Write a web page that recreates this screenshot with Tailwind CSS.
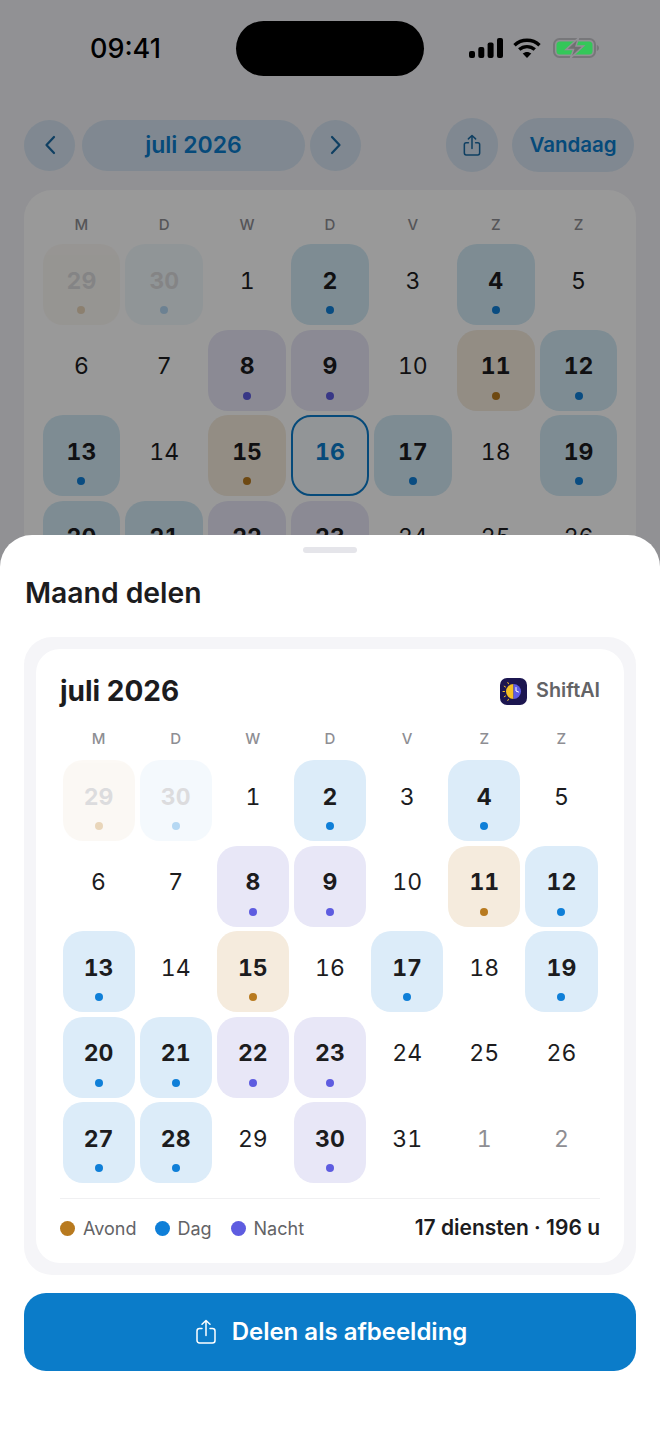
<!DOCTYPE html>
<html lang="nl">
<head>
  <meta charset="UTF-8">
  <meta name="viewport" content="width=device-width, initial-scale=1.0">
  <title>Maand delen | ShiftAI</title>
  <script src="https://cdn.jsdelivr.net/npm/@tailwindcss/browser@4"></script>
</head>
<body class="bg-white">
<div class="relative w-[660px] h-[1434px] overflow-hidden bg-[#f2f2f7] font-['Inter','Liberation_Sans',sans-serif] [font-optical-sizing:none]">

  <!-- Kalender achter de sheet -->
  <div>
    <div class="relative z-10 flex items-start justify-between h-[118px] pl-[90px] pr-[61px] pt-[32px]">
      <span class="text-[27px] leading-[34px] font-medium text-black">09:41</span>
      <div class="flex items-center gap-[10px] pt-[6px]">
        <svg class="-ml-[1px]" width="34" height="20" viewBox="0 0 34 20" fill="#000"><rect x="0" y="13" width="6" height="7" rx="2"/><rect x="9.300" y="9" width="6" height="11" rx="2"/><rect x="18.600" y="4.500" width="6" height="15.500" rx="2"/><rect x="28" y="0" width="6" height="20" rx="2"/></svg>
        <svg width="28" height="20" viewBox="0 0 28 20" fill="none" stroke="#000" stroke-width="3.400"><path d="M1.500 7.200C8.500 .6 19.500 .6 26.500 7.200"/><path d="M6.200 11.600C10.700 7.600 17.300 7.600 21.800 11.600"/><path d="M14 20 9.700 15.600C12.200 13.500 15.800 13.500 18.300 15.600Z" fill="#000" stroke="none"/></svg>
        <svg class="ml-[2px]" width="46" height="20" viewBox="0 0 46 20"><rect x="1" y="1" width="41" height="18" rx="5.500" fill="none" stroke="#77777a" stroke-width="2"/><rect x="3.500" y="3.500" width="36" height="13" rx="3.500" fill="#34c759"/><path d="M43.800 7v6c1.400-.5 2.200-1.600 2.200-3s-.8-2.500-2.200-3Z" fill="#77777a"/><path d="M25.500 0 13 11.500h7.500L17.500 20l13-12h-7.500Z" fill="#707072" stroke="#929196" stroke-width="1.500"/></svg>
      </div>
    </div>

    <div class="flex items-center h-[54px] px-[24px]">
      <button class="flex items-center justify-center w-[51px] h-[51px] rounded-full bg-[#0a7ccc]/12">
        <svg width="14" height="22" viewBox="0 0 14 22" fill="none" stroke="#1a6aa3" stroke-width="2.200" stroke-linecap="round" stroke-linejoin="round"><path d="M11 3 3.500 11l7.500 8"/></svg>
      </button>
      <div class="flex items-center justify-center w-[223px] h-[51px] ml-[7px] rounded-full bg-[#0a7ccc]/12 text-[23px] font-semibold text-[#0a7ccc]">juli 2026</div>
      <button class="flex items-center justify-center w-[51px] h-[51px] ml-[5px] rounded-full bg-[#0a7ccc]/12">
        <svg width="14" height="22" viewBox="0 0 14 22" fill="none" stroke="#1a6aa3" stroke-width="2.200" stroke-linecap="round" stroke-linejoin="round"><path d="M3 3l7.500 8L3 19"/></svg>
      </button>
      <button class="flex items-center justify-center w-[52px] h-[54px] ml-auto rounded-full bg-[#0a7ccc]/12">
        <svg width="18" height="22" viewBox="0 0 20 24" fill="none" stroke="#1a6aa3" stroke-width="1.700" stroke-linecap="round" stroke-linejoin="round"><path d="M6 9.500H3.500a2 2 0 0 0-2 2V21a2 2 0 0 0 2 2h13a2 2 0 0 0 2-2v-9.500a2 2 0 0 0-2-2H14"/><path d="M10 16V1.500M6 5.200 10 1.500l4 3.700"/></svg>
      </button>
      <button class="flex items-center justify-center w-[122px] h-[54px] ml-[14px] mr-[2px] rounded-full bg-[#0a7ccc]/12 text-[20.500px] font-semibold text-[#0a7ccc]">Vandaag</button>
    </div>

    <div class="mx-[24px] mt-[18px] px-[16px] pt-[23px] rounded-[28px] bg-white h-[700px]">
      <div class="grid grid-cols-7 mb-[5px]" data-weekdays></div>
      <div class="grid grid-cols-7" data-grid="back"></div>
    </div>
  </div>

  <div class="absolute top-[21px] left-[236px] w-[188px] h-[55px] rounded-full bg-black z-10"></div>

  <!-- Dimlaag -->
  <div class="absolute inset-0 bg-black/40"></div>

  <!-- Sheet -->
  <div class="absolute top-[535px] left-0 right-0 bottom-0 rounded-t-[32px] bg-white px-[24px]">
    <div class="w-[54px] h-[6px] mx-auto mt-[12px] rounded-full bg-[#e5e5ea]"></div>
    <h2 class="mt-[22px] ml-[1px] text-[28.300px] leading-[36px] font-semibold text-[#1c1c1e]">Maand delen</h2>

    <div class="mt-[26px] p-[12px] rounded-[28px] bg-[#f5f5f8]">
      <div class="px-[24px] pt-[20px] pb-[5px] rounded-[24px] bg-white">
        <div class="flex items-center justify-between h-[44px]">
          <span class="text-[28px] font-bold text-[#1c1c1e]">juli 2026</span>
          <div class="flex items-center gap-[9px]">
            <svg width="27" height="27" viewBox="0 0 27 27">
              <rect width="27" height="27" rx="7" fill="#1c1650"/>
              <g stroke="#f5c024" stroke-width="1" stroke-linecap="round"><path d="M4.500 13.500H3M5.500 9 4.200 8.200M5.500 18l-1.300.8M8.500 5.800 7.800 4.500M8.500 21.200l-.7 1.300"/></g>
              <path d="M13.500 6a7.500 7.500 0 0 0 0 15Z" fill="#f5c024"/>
              <path d="M13.500 6a7.500 7.500 0 0 1 0 15Z" fill="#5e5ce6"/>
              <path d="M16 9.500v3.500l2.500 1" fill="none" stroke="#fff" stroke-width="1" stroke-linecap="round"/>
            </svg>
            <span class="text-[19.800px] font-semibold text-[#636366]">ShiftAI</span>
          </div>
        </div>
        <div class="grid grid-cols-7 mt-[14px] mb-[7px]" data-weekdays></div>
        <div class="grid grid-cols-7" data-grid="front"></div>
        <div class="flex items-center justify-between h-[60px] mt-[12px] border-t border-[#f0f0f2]">
          <div class="flex items-center text-[18px] text-[#636366]">
            <span class="w-[15px] h-[15px] rounded-full bg-[#b87a1f]"></span><span class="ml-[8px]">Avond</span>
            <span class="w-[15px] h-[15px] ml-[19px] rounded-full bg-[#0f7fd8]"></span><span class="ml-[7px]">Dag</span>
            <span class="w-[15px] h-[15px] ml-[19px] rounded-full bg-[#5e5ce0]"></span><span class="ml-[8px]">Nacht</span>
          </div>
          <span class="text-[21px] font-semibold text-[#1c1c1e]">17 diensten · 196 u</span>
        </div>
      </div>
    </div>

    <button class="flex items-center justify-center gap-[16px] w-full h-[78px] mt-[18px] pl-[3px] rounded-[22px] bg-[#0b7cc9] text-[24px] font-semibold text-white">
      <svg width="20" height="25" viewBox="0 0 20 25" fill="none" stroke="#fff" stroke-width="1.500" stroke-linecap="round" stroke-linejoin="round"><path d="M6 9.500H3.500a2.500 2.500 0 0 0-2.500 2.500v9.500A2.500 2.500 0 0 0 3.500 24h13a2.500 2.500 0 0 0 2.500-2.500V12a2.500 2.500 0 0 0-2.500-2.500H14"/><path d="M10 16.500V1.500M6 5.200 10 1.500l4 3.700"/></svg>
      Delen als afbeelding
    </button>
  </div>
</div>

<script>
  const dag = "b", nacht = "p", avond = "a";
  const weken = [
    [[29, avond, 1], [30, dag, 1], [1], [2, dag], [3], [4, dag], [5]],
    [[6], [7], [8, nacht], [9, nacht], [10], [11, avond], [12, dag]],
    [[13, dag], [14], [15, avond], [16, "t"], [17, dag], [18], [19, dag]],
    [[20, dag], [21, dag], [22, nacht], [23, nacht], [24], [25], [26]],
    [[27, dag], [28, dag], [29], [30, nacht], [31], [1, "x"], [2, "x"]],
  ];
  const vlak = { b: "bg-[#dcecf9]", p: "bg-[#e8e7f7]", a: "bg-[#f5ebdd]" };
  const vlakAchter = { b: "bg-[#d2eaf6]", p: "bg-[#e8e7f7]", a: "bg-[#f5ebdd]" };
  const stip = { b: "bg-[#0f7fd8]", p: "bg-[#5e5ce0]", a: "bg-[#b87a1f]" };

  document.querySelectorAll("[data-weekdays]").forEach(rij => {
    ["M", "D", "W", "D", "V", "Z", "Z"].forEach(d => {
      const el = document.createElement("div");
      el.className = "text-center text-[15px] leading-[24px] font-medium text-[#8e8e93]";
      el.textContent = d;
      rij.appendChild(el);
    });
  });

  document.querySelectorAll("[data-grid]").forEach(grid => {
    const isAchter = grid.dataset.grid === "back";
    weken.flat().forEach(([nr, soort, vaag]) => {
      const cel = document.createElement("div");
      cel.className = "px-[2.5px] py-[2.25px]";
      const vandaag = soort === "t" && isAchter;
      const dienst = (isAchter ? vlakAchter : vlak)[soort];
      let cls = "relative flex items-center justify-center h-[81px] pb-[8px] rounded-[20px] text-[23px] tabular-nums ";
      if (vandaag) cls += "bg-[#0a7ccc]/5 border-[2.5px] border-[#0a7ccc] font-bold text-[#0a7ccc]";
      else if (vaag) cls += dienst + " font-bold text-[#8e8e93] opacity-30";
      else if (dienst) cls += dienst + " font-bold text-[#1c1c1e]";
      else if (soort === "x") cls += "text-[#8e8e93]";
      else cls += "text-[#1c1c1e]";
      cel.innerHTML = `<div class="${cls}"><span>${nr}</span>` +
        (dienst ? `<span class="absolute bottom-[11px] left-1/2 w-[8px] h-[8px] -ml-[4px] rounded-full ${stip[soort]}"></span>` : "") +
        `</div>`;
      grid.appendChild(cel);
    });
  });
</script>
</body>
</html>
